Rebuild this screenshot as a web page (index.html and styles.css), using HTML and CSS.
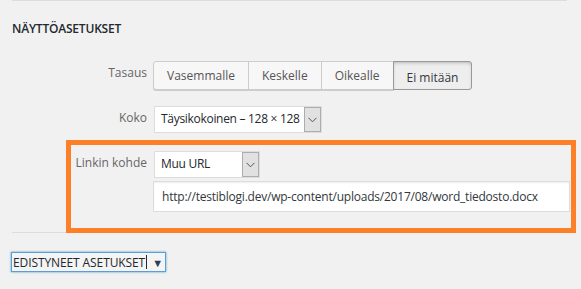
FILE: index.html
```html
<!DOCTYPE html>
<html lang="fi">
<head>
    <meta charset="UTF-8">
    <title>Näyttöasetukset</title>
    <link rel="stylesheet" href="styles.css">
</head>
<body>
    <div class="settings">
        <h2 class="heading">Näyttöasetukset</h2>

        <div class="row row-align">
            <span class="label">Tasaus</span>
            <div class="btn-group">
                <button class="btn btn-first">Vasemmalle</button>
                <button class="btn">Keskelle</button>
                <button class="btn">Oikealle</button>
                <button class="btn btn-last active">Ei mitään</button>
            </div>
        </div>

        <div class="row row-size">
            <span class="label">Koko</span>
            <div class="select select-size">
                <span class="select-value">Täysikokoinen – 128 × 128</span>
                <span class="select-arrow">
                    <svg width="9" height="6" viewBox="0 0 9 6"><path d="M0.5 0.8 L4.5 4.8 L8.5 0.8" fill="none" stroke="#555" stroke-width="1"/></svg>
                </span>
            </div>
        </div>

        <div class="row row-link">
            <span class="label">Linkin kohde</span>
            <div class="select select-link">
                <span class="select-value">Muu URL</span>
                <span class="select-arrow">
                    <svg width="9" height="6" viewBox="0 0 9 6"><path d="M0.5 0.8 L4.5 4.8 L8.5 0.8" fill="none" stroke="#555" stroke-width="1"/></svg>
                </span>
            </div>
        </div>

        <div class="row row-url">
            <span></span>
            <div class="url-input">http://testiblogi.dev/wp-content/uploads/2017/08/word_tiedosto.docx</div>
        </div>

        <hr class="divider">

        <button class="advanced">
            <span class="advanced-text">Edistyneet asetukset</span>
            <span class="text-caret"></span>
            <span class="advanced-arrow">&#9660;</span>
        </button>

        <!-- annotation frame drawn over the link row -->
        <div class="highlight"></div>
    </div>
</body>
</html>
```

FILE: styles.css
```css
body {
    margin: 0;
    background-color: #f1f1f1;
    font-family: 'Open Sans', 'Noto Sans', sans-serif;
    font-size: 12px;
    line-height: 16px;
    color: #32373c;
    width: 581px;
    height: 289px;
    overflow: hidden;
}

.settings {
    position: relative;
    margin: 0 14px 0 12px;
    border-top: 1px solid #dcdcdc;
    height: 288px;
}

.heading {
    margin: 0;
    padding-top: 20px;
    font-size: 12px;
    line-height: 16px;
    font-weight: 600;
    letter-spacing: -0.2px;
    text-transform: uppercase;
    color: #23282d;
}

.row {
    display: grid;
    grid-template-columns: 135px auto;
    column-gap: 6px;
    align-items: start;
}

.row-align {
    margin-top: 24px;
}

.row-size {
    margin-top: 16px;
}

.row-link {
    margin-top: 18px;
}

.row-url {
    margin-top: 3px;
}

.label {
    text-align: right;
    color: #666;
    padding-top: 4px;
}

.btn-group {
    display: flex;
}

.btn {
    font-family: inherit;
    font-size: 12px;
    height: 29px;
    padding: 0 13px;
    margin: 0 0 0 -1px;
    border: 1px solid #cccccc;
    background: #f7f7f7;
    color: #555;
    box-shadow: 0 1px 0 #ccc;
}

.btn-first {
    margin-left: 0;
    border-radius: 3px 0 0 3px;
}

.btn-last {
    border-radius: 0 3px 3px 0;
}

.btn.active {
    background: #eeeeee;
    border-color: #999;
    color: #32373c;
    box-shadow: inset 0 2px 5px -3px rgba(0, 0, 0, 0.5);
    padding-top: 3px;
}

.select {
    display: flex;
    height: 27px;
    box-sizing: border-box;
    border: 1px solid #dddddd;
    background: #fff;
    margin-left: 1px;
}

.select-size {
    width: 168px;
}

.select-link {
    width: 106px;
}

.select-value {
    flex: 1;
    padding: 4px 0 0 6px;
    white-space: nowrap;
    overflow: hidden;
    letter-spacing: -0.3px;
    color: #23282d;
}

.select-arrow {
    width: 17px;
    box-sizing: border-box;
    border: 1px solid #adadad;
    background: #e1e1e1;
    display: flex;
    align-items: center;
    justify-content: center;
}

.url-input {
    height: 31px;
    box-sizing: border-box;
    border: 1px solid #dddddd;
    background: #fff;
    box-shadow: inset 0 1px 2px rgba(0, 0, 0, 0.07);
    padding: 7px 0 0 8px;
    width: 417px;
    color: #32373c;
    letter-spacing: -0.22px;
    white-space: nowrap;
}

.divider {
    margin: 20px 0 0 0;
    border: 0;
    border-top: 1px solid #dcdcdc;
    height: 0;
}

.advanced {
    margin: 19px 0 0 -1px;
    height: 20px;
    width: 155px;
    padding: 0 0 0 1px;
    display: flex;
    align-items: center;
    white-space: nowrap;
    font-family: inherit;
    font-size: 12px;
    letter-spacing: -0.1px;
    text-transform: uppercase;
    color: #23282d;
    background: #f4f4f4;
    border: 1px solid #5b9dd9;
    box-shadow: 0 0 2px rgba(30, 140, 190, 0.8);
}

.text-caret {
    width: 1px;
    height: 14px;
    background: #23282d;
    margin-left: 1px;
}

.advanced-arrow {
    font-size: 11px;
    margin-left: 5px;
    color: #2c3e50;
}

.highlight {
    position: absolute;
    left: 54px;
    top: 139px;
    width: 510px;
    height: 93px;
    box-sizing: border-box;
    border: 5px solid #fd7f28;
    pointer-events: none;
}
```
